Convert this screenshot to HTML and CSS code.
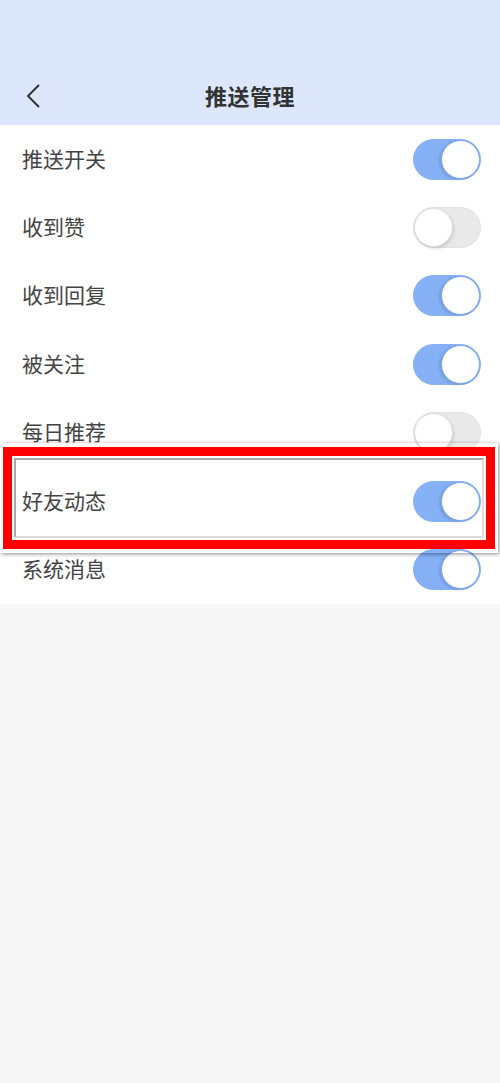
FILE: index.html
```html
<!DOCTYPE html>
<html lang="zh">
<head>
    <meta charset="UTF-8">
    <meta name="viewport" content="width=device-width, initial-scale=1.0">
    <title>推送管理</title>
    <link rel="stylesheet" href="styles.css">
</head>
<body>
    <div class="header">
        <div class="nav">
            <svg class="back" width="20" height="26" viewBox="0 0 20 26">
                <polyline points="15,2 4,13 15,24" fill="none" stroke="#333" stroke-width="2"/>
            </svg>
            <h1>推送管理</h1>
        </div>
    </div>

    <div class="list">
        <div class="row"><span>推送开关</span><div class="switch on"><i></i></div></div>
        <div class="row"><span>收到赞</span><div class="switch"><i></i></div></div>
        <div class="row"><span>收到回复</span><div class="switch on"><i></i></div></div>
        <div class="row"><span>被关注</span><div class="switch on"><i></i></div></div>
        <div class="row"><span>每日推荐</span><div class="switch"><i></i></div></div>
        <div class="row"><span>好友动态</span><div class="switch on"><i></i></div></div>
        <div class="row"><span>系统消息</span><div class="switch on"><i></i></div></div>

        <!-- 高亮框 -->
        <div class="highlight">
            <div class="red">
                <div class="inner"></div>
            </div>
        </div>
    </div>
</body>
</html>
```

FILE: styles.css
```css
body {
    margin: 0;
    font-family: "Noto Sans CJK SC", "Noto Sans", sans-serif;
    background: #f7f7f7;
    color: #333;
}
.header {
    background: #dce7fb;
    height: 125px;
    display: flex;
    align-items: flex-end;
}
.nav {
    position: relative;
    height: 58px;
    width: 100%;
    display: flex;
    align-items: center;
    justify-content: center;
}
.back {
    position: absolute;
    left: 24px;
    top: 16px;
}
h1 {
    margin: 0 0 2px;
    font-size: 22px;
    font-weight: bold;
    color: #333;
    letter-spacing: 0.5px;
}
.list {
    position: relative;
    background: #fff;
}
.row {
    height: 68.4px;
    display: flex;
    align-items: center;
    justify-content: space-between;
    padding: 0 19px 0 22px;
    font-size: 21px;
    color: #444;
}
.row span {
    line-height: 1;
    margin-bottom: 2px;
}
.switch {
    position: relative;
    width: 66px;
    height: 39px;
    border-radius: 21px;
    background: #e9e9e9;
    border: 1px solid #e2e2e2;
}
.switch i {
    position: absolute;
    top: 0;
    left: 0;
    width: 37px;
    height: 37px;
    border-radius: 50%;
    background: #fff;
    border: 1px solid #ddd;
    box-shadow: 1px 2px 3px rgba(0, 0, 0, 0.12);
}
.switch.on {
    background: #86b1f6;
    border-color: #86b1f6;
}
.switch.on i {
    left: auto;
    right: 0;
    border-color: #7aa6f0;
    box-shadow: -2px 1px 3px rgba(0, 0, 0, 0.12);
}
.highlight {
    position: absolute;
    left: 0;
    top: 318px;
    width: 492px;
    height: 102px;
    padding: 4px 3px;
    box-shadow: 1px 1px 4px rgba(0, 0, 0, 0.45);
    display: flex;
}
.red {
    flex: 1;
    border: 9px solid #ff0000;
    padding: 2px;
    display: flex;
}
.inner {
    flex: 1;
    border: 2px solid #a8a8a8;
    border-right-color: #ddd;
    border-bottom-color: #ddd;
}
```
